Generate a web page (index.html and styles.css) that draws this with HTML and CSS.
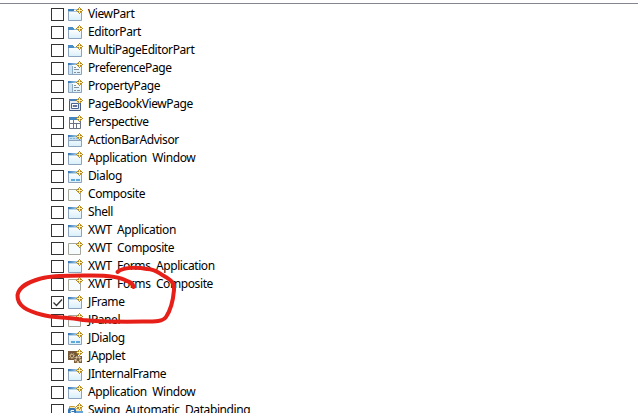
FILE: index.html
```
<!DOCTYPE html>
<html lang="en">
<head>
<meta charset="utf-8">
<title>Wizard types</title>
<link rel="stylesheet" href="styles.css">
</head>
<body>
<svg class="defs" width="0" height="0" aria-hidden="true">
  <defs>
    <linearGradient id="bar"><stop offset="0" stop-color="#2e75b5"/><stop offset="1" stop-color="#b5d5ee"/></linearGradient>
    <linearGradient id="glass" x2="0" y2="1"><stop offset="0" stop-color="#fff"/><stop offset="1" stop-color="#d9effa"/></linearGradient>
    <symbol id="star" viewBox="0 0 16 15"><path d="M11 0h1v1h1v1h1v1h1v1h-1v1h-1v1h-1v1h-1v-1h-1v-1h-1v-1h-1v-1h1v-1h1v-1h1z" fill="#b58719"/><path d="M11 1h1v2h2v1h-2v2h-1v-2h-2v-1h2z" fill="#fff0b8"/><path d="M10 1h1v1h-1zM12 1h1v1h-1zM10 5h1v1h-1zM12 5h1v1h-1z" fill="#c39a30"/></symbol>
    <symbol id="frame" viewBox="0 0 16 15"><path d="M.5 2.500h13v11H.5z" fill="url(#glass)" stroke="#8ba3bd"/></symbol>
    <symbol id="window" viewBox="0 0 16 15"><use href="#frame"/><path d="M0 2h10v2H0z" fill="url(#bar)"/><path d="M1 4h9v1H1z" fill="#b9d6ec"/><use href="#star"/></symbol>
    <symbol id="view" viewBox="0 0 16 15"><use href="#frame"/><path d="M0 2h6v2H0z" fill="#3b7ebc"/><path d="M6 2h4v1H6zM1 4h9v1H1z" fill="#a6c6df"/><use href="#star"/></symbol>
    <symbol id="editor" viewBox="0 0 16 15"><path d="M.5 4.500h13v9H.5z" fill="url(#glass)" stroke="#8ba3bd"/><path d="M0 2h5v1h1v2H0z" fill="#4a8cc6"/><path d="M6 4h5v1H6z" fill="#87b2d7"/><use href="#star"/></symbol>
    <symbol id="page" viewBox="0 0 16 15"><use href="#frame"/><path d="M0 2h10v2H0z" fill="url(#bar)"/><path d="M1 4h3v9H1z" fill="#cde4f5"/><path d="M4.500 5v8" stroke="#8baac5"/><path d="M6 6.500h2m-2 2h5m-5 3h2m1 0h3" stroke="#8a9099"/><use href="#star"/></symbol>
    <symbol id="book" viewBox="0 0 16 15"><path d="M1.500 2.500h11v11h-11z" fill="#e7edf5" stroke="#4a5c80"/><path d="M1 2h9v2H1z" fill="#477fb8"/><path d="M3.500 6.500h7v5h-7z" fill="#fff" stroke="#4a6591"/><path d="M5 8.500h4v1H5z" fill="#c8a968" stroke="#66749a"/><use href="#star"/></symbol>
    <symbol id="perspective" viewBox="0 0 16 15"><path d="M1.500 2.500h11v11h-11z" fill="#fff" stroke="#6d7481"/><path d="M1 2h9v3H1z" fill="#4386c2"/><path d="M5.500 5v8M2 8.500h10M8.500 9v4" stroke="#6d7481"/><use href="#star"/></symbol>
    <symbol id="action" viewBox="0 0 16 15"><use href="#frame"/><path d="M0 2h10v2H0z" fill="url(#bar)"/><path d="M1 4h12v3H1z" fill="#c2dff2"/><path d="M2 5.500h2m1 0h2m1 0h2" stroke="#8bb3d3"/><path d="M1 7.500h12" stroke="#8ba3bd"/><use href="#star"/></symbol>
    <symbol id="dialog" viewBox="0 0 16 15"><use href="#window"/><path d="M3 11h4m1 0h4" stroke="#61a7d8" stroke-width="2"/></symbol>
    <symbol id="composite" viewBox="0 0 16 15"><path d="M.5 2.500h12v11H.5z" fill="#f6fbfd" stroke="#a5a79c"/><use href="#star"/></symbol>
    <symbol id="applet" viewBox="0 0 16 15"><path d="M0 2h10v5h4v7H6v-3H0z" fill="#795b37"/><circle cx="4" cy="7" r="3" fill="#c8ae83" stroke="#6b5036" stroke-dasharray="1 1" stroke-width="2"/><circle cx="4" cy="7" r="1" fill="#5d442c"/><circle cx="10" cy="10.500" r="2.500" fill="#765c3e" stroke="#dcc8a8" stroke-dasharray="2 1" stroke-width="2"/><use href="#star"/></symbol>
    <symbol id="binding" viewBox="0 0 16 15"><path d="M1.500 3.500h5l2 2h5v8h-12z" fill="#f9e7aa" stroke="#c99b37"/><rect y="5" width="8" height="9" rx="2" fill="#3676b5"/><path d="M6 7.500H3v2h3v2H2" fill="none" stroke="#fff"/><path d="M8 8h7v3H8z" fill="#66a5dc"/><use href="#star"/></symbol>
  </defs>
</svg>
<ul class="tree" id="tree"></ul>
<svg class="mark" width="170" height="70" viewBox="12 260 170 70" aria-hidden="true"><path d="M117.500 272C123 267 137 267 147 269C156 269 158 273 164 276C171 280 175 283 174 290C173 302 170 311 166 317C162 323 151 321 127 321.700C105 321 101 322 83 320C66 317 54 318 43 315C27 311 17 306 17.500 295C19 286 29 282 39 279C50 275 64 276 83 275.500C101 275 119 276 127 281C131 282 133 284 133.500 287"/></svg>
<script src="tree.js"></script>
</body>
</html>
```
FILE: styles.css
```
body { margin: 0; height: 413px; overflow: hidden; background: #fff; color: #000; font: 12px/18px "Noto Sans", sans-serif; position: relative; }
.defs { position: absolute; }
.tree { margin: 3px 0 0; padding: 1px 0 0 51px; border-top: 1px solid #828790; list-style: none; }
.row { display: flex; align-items: center; height: 18px; white-space: pre; }
.box { width: 13px; height: 13px; box-sizing: border-box; border: 1px solid #333; background: #fff; margin-top: 1px; }
.box svg { display: block; }
.box path { fill: none; stroke: #333; stroke-width: 1.3; }
.icon { width: 16px; height: 15px; margin: 0 4px; }
.name { letter-spacing: -0.4px; word-spacing: 2.7px; }
.mark { position: absolute; left: 12px; top: 260px; }
.mark path { fill: none; stroke: #e71f19; stroke-width: 4; stroke-linecap: round; stroke-linejoin: round; }
```
FILE: tree.js
```
const rows = [
  ["view", "ViewPart"], ["editor", "EditorPart"], ["editor", "MultiPageEditorPart"],
  ["page", "PreferencePage"], ["page", "PropertyPage"], ["book", "PageBookViewPage"],
  ["perspective", "Perspective"], ["action", "ActionBarAdvisor"], ["window", "Application Window"],
  ["dialog", "Dialog"], ["composite", "Composite"], ["window", "Shell"],
  ["window", "XWT Application"], ["composite", "XWT Composite"], ["window", "XWT Forms Application"],
  ["composite", "XWT Forms Composite"], ["window", "JFrame", true], ["composite", "JPanel"],
  ["dialog", "JDialog"], ["applet", "JApplet"], ["window", "JInternalFrame"],
  ["window", "Application Window"], ["binding", "Swing Automatic Databinding"]
];
document.getElementById("tree").innerHTML = rows.map(([icon, name, checked]) =>
  `<li class="row"><span class="box">${checked ? '<svg width="11" height="11"><path d="M1.500 5.500L4.500 8.500L10 2.500"/></svg>' : ""}</span><svg class="icon"><use href="#${icon}"/></svg><span class="name">${name}</span></li>`
).join("");
```
